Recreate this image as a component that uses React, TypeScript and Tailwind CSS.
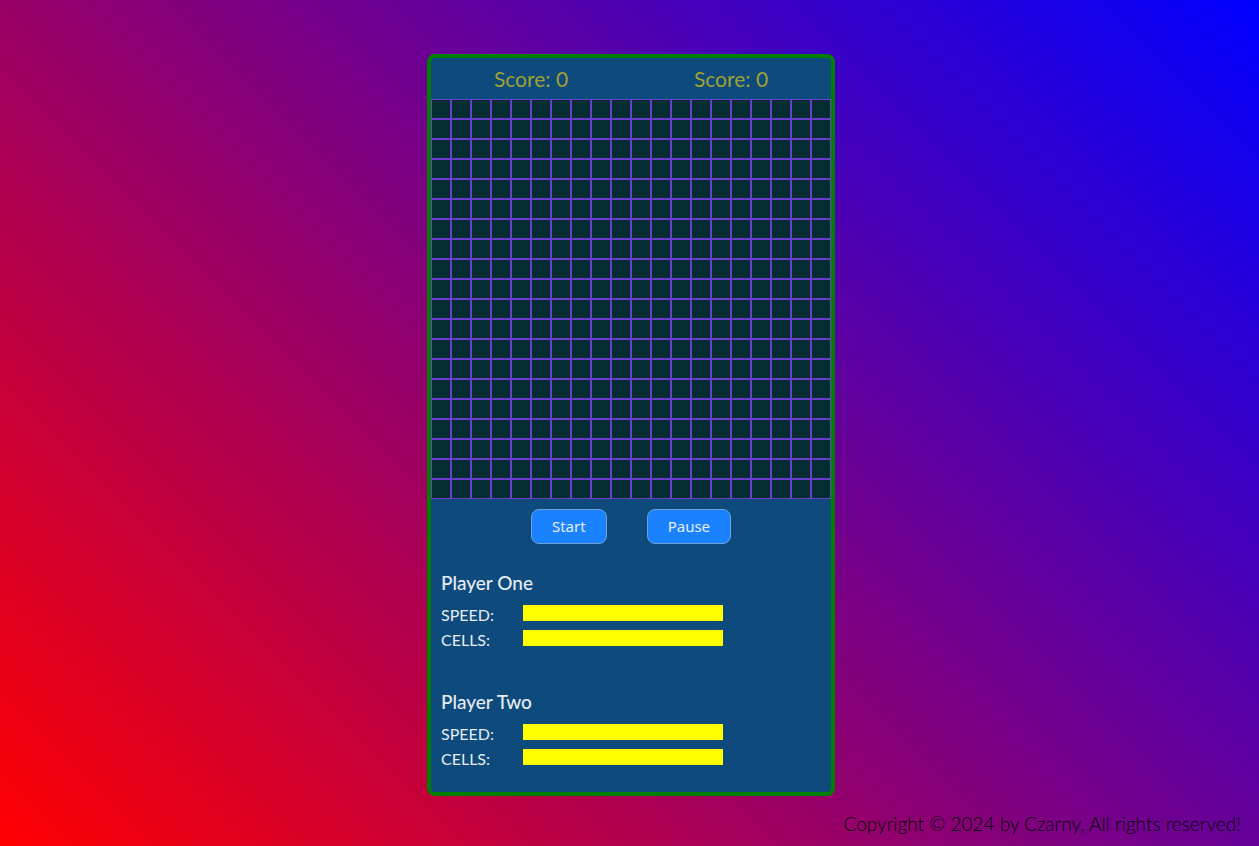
const GRID_SIZE = 20;

function Board() {
  return (
    <div className="grid grid-cols-20" role="img" aria-label="Game board">
      {Array.from({ length: GRID_SIZE * GRID_SIZE }, (_, i) => (
        <div key={i} className="h-5 border border-[#6a3dcd] bg-[#042d33]" />
      ))}
    </div>
  );
}

function Stat({ label }: { label: string }) {
  return (
    <div className="flex h-[25px] items-start">
      <span className="w-[82px] text-base leading-[23px]">{label}</span>
      <div className="mt-0.5 h-4 w-[200px] bg-[#ffff00]" role="meter" aria-label={label} aria-valuenow={100} />
    </div>
  );
}

function Player({ name }: { name: string }) {
  return (
    <section>
      <h2 className="mb-1.5 text-[19px] leading-7 font-medium">{name}</h2>
      <Stat label="SPEED:" />
      <Stat label="CELLS:" />
    </section>
  );
}

function GameButton({ children }: { children: string }) {
  return (
    <button
      type="button"
      className="h-[35px] rounded-lg border border-[#6ba3d6] bg-[#1a82ff] px-5 pb-0.5 font-['Noto_Sans',sans-serif] text-[15px] leading-5 text-[#e4eefa]"
    >
      {children}
    </button>
  );
}

export default function App() {
  return (
    <div className="flex min-h-screen flex-col bg-[linear-gradient(45deg,#ff0000,#0000ff)] pt-[54px] font-['Lato',sans-serif]">
      <main className="ml-[3px] w-[408px] max-w-full self-center rounded-lg border-4 border-[#008000] bg-[#0e4a7c] text-[#e6ecf2]">
        <header className="grid grid-cols-2 text-center text-[21px] leading-[41px] text-[#9fa133]">
          <p>Score: 0</p>
          <p>Score: 0</p>
        </header>
        <Board />
        <div className="flex justify-center gap-10 pt-2.5">
          <GameButton>Start</GameButton>
          <GameButton>Pause</GameButton>
        </div>
        <div className="flex flex-col gap-[35px] px-2.5 pt-[25px] pb-5">
          <Player name="Player One" />
          <Player name="Player Two" />
        </div>
      </main>
      <footer className="px-[18px] pt-[19px] pb-[13px] text-right text-[19px] leading-[18px] font-light text-black">
        Copyright © 2024 by Czarny, All rights reserved!
      </footer>
    </div>
  );
}
